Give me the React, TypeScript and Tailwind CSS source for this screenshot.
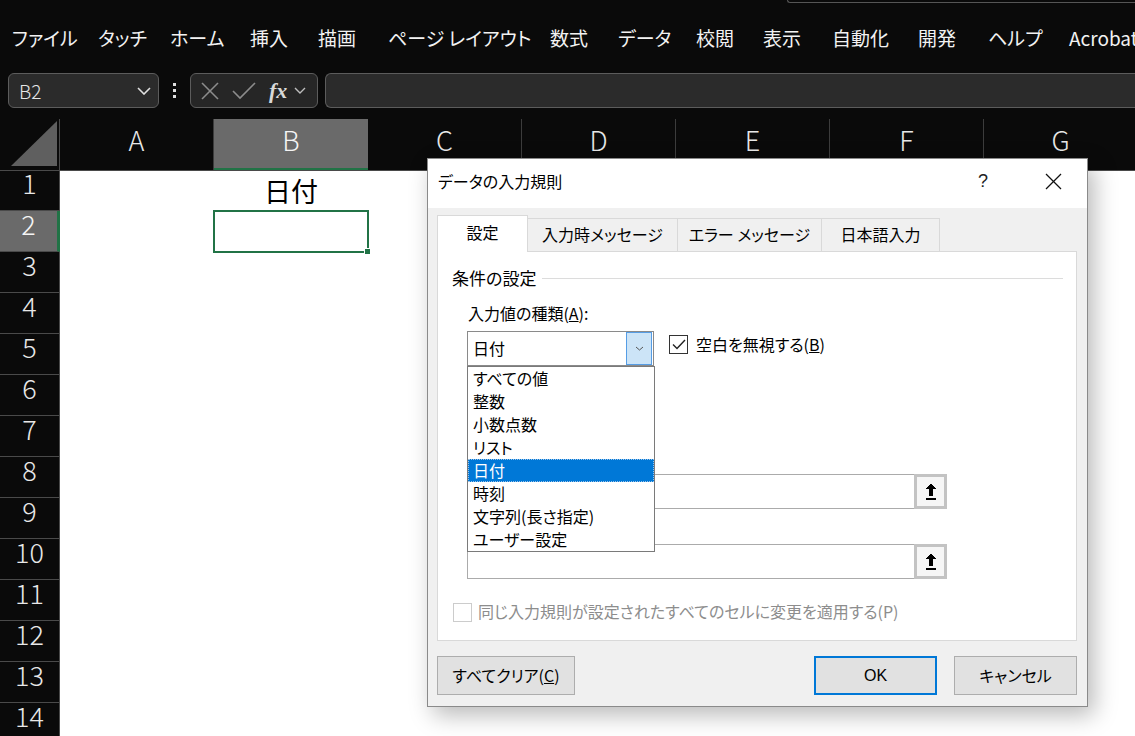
import React from "react";

const menu: [string, number][] = [
  ["ファイル", 86],
  ["タッチ", 72],
  ["ホーム", 80],
  ["挿入", 68],
  ["描画", 70],
  ["ページ レイアウト", 162],
  ["数式", 68],
  ["データ", 78],
  ["校閲", 67],
  ["表示", 69],
  ["自動化", 86],
  ["開発", 70],
  ["ヘルプ", 81],
  ["Acrobat", 120],
];

const cols = ["A", "B", "C", "D", "E", "F", "G"];
const rows = Array.from({ length: 14 }, (_, i) => i + 1);
const items = ["すべての値", "整数", "小数点数", "リスト", "日付", "時刻", "文字列(長さ指定)", "ユーザー設定"];

function Chevron({ className = "", w = 14, h = 8, color = "#d0d0d0", sw = 1.6 }: { className?: string; w?: number; h?: number; color?: string; sw?: number }) {
  return (
    <svg width={w} height={h} viewBox={`0 0 ${w} ${h}`} className={className}>
      <polyline points={`1,1 ${w / 2},${h - 1} ${w - 1},1`} fill="none" stroke={color} strokeWidth={sw} />
    </svg>
  );
}

function UpArrow() {
  return (
    <svg width="14" height="20" viewBox="0 0 14 20" shapeRendering="crispEdges">
      <path d="M7 1 L12 7 L9 7 L9 14 L5 14 L5 7 L2 7 Z" fill="#000" />
      <rect x="2" y="16" width="10" height="1.5" fill="#000" />
    </svg>
  );
}

function RefInput() {
  return (
    <div className="flex w-[480px] h-[35px]">
      <div className="flex-1 border border-[#ababab] border-r-0 bg-white" />
      <div className="w-[33px] h-[35px] border-[3px] border-[#c3c3c3] bg-[#f6f6f6] flex items-center justify-center">
        <UpArrow />
      </div>
    </div>
  );
}

export default function App() {
  return (
    <div className="w-[1135px] h-[736px] overflow-hidden relative bg-white font-['Noto_Sans_CJK_JP',sans-serif] [font-feature-settings:'palt']">
      {/* top dark area */}
      <div className="bg-[#0a0a0a]">
        <div className="h-[3px] flex">
          <div className="ml-[787px] flex-1 h-[3px] border-l border-b border-[#555] rounded-bl-[4px]" />
        </div>
        <div className="h-[70px] flex items-center pl-[12px] text-[19px] text-[#f2f2f2] whitespace-nowrap">
          {menu.map(([t, w]) => (
            <div key={t} style={{ width: w }} className="shrink-0">
              {t}
            </div>
          ))}
        </div>
        {/* formula bar */}
        <div className="h-[35px] flex items-center">
          <div className="ml-[8px] w-[151px] h-[35px] rounded-[6px] border border-[#5c5c5c] bg-[#2b2b2b] flex items-center pl-[10px] pr-[7px]">
            <span className="text-[19px] text-[#e6e6e6] font-light leading-none">B2</span>
            <Chevron className="ml-auto" w={14} h={8} color="#e0e0e0" />
          </div>
          <div className="w-[31px] flex flex-col items-center gap-[3px]">
            <div className="w-[3px] h-[3px] bg-[#e0e0e0]" />
            <div className="w-[3px] h-[3px] bg-[#e0e0e0]" />
            <div className="w-[3px] h-[3px] bg-[#e0e0e0]" />
          </div>
          <div className="w-[128px] h-[35px] rounded-[6px] border border-[#5c5c5c] bg-[#262626] flex items-center">
            <svg width="20" height="20" viewBox="0 0 20 20" className="ml-[9px]">
              <line x1="2" y1="2" x2="18" y2="18" stroke="#8c8c8c" strokeWidth="1.6" />
              <line x1="18" y1="2" x2="2" y2="18" stroke="#8c8c8c" strokeWidth="1.6" />
            </svg>
            <svg width="24" height="18" viewBox="0 0 24 18" className="ml-[12px]">
              <polyline points="1,9 8,16 23,1" fill="none" stroke="#8c8c8c" strokeWidth="1.6" />
            </svg>
            <span className="ml-[13px] text-[22px] italic font-bold text-[#d8d8d8] font-['Liberation_Serif',serif] leading-none">fx</span>
            <Chevron className="ml-[7px]" w={12} h={7} color="#bdbdbd" sw={1.4} />
          </div>
          <div className="ml-[7px] flex-1 h-[35px] rounded-l-[6px] border border-r-0 border-[#5c5c5c] bg-[#2b2b2b]" />
        </div>
        <div className="h-[11px]" />
        {/* column headers */}
        <div className="h-[52px] flex border-b border-[#4a4a4a]">
          <div className="w-[60px] h-full border-r border-[#4a4a4a] flex items-end justify-end pr-[2px] pb-[4px] shrink-0">
            <svg width="46" height="45" viewBox="0 0 46 45">
              <polygon points="0,45 46,45 46,0" fill="#5f5f5f" />
            </svg>
          </div>
          {cols.map((c) => (
            <div
              key={c}
              className={
                c === "B"
                  ? "w-[154px] shrink-0 h-full bg-[#6a6a6a] border-b-[2px] border-[#217346] flex items-center justify-center pb-[8px] text-[27px] font-light text-[#f5f5f5] leading-none"
                  : "w-[154px] shrink-0 h-full border-r border-[#3c3c3c] flex items-center justify-center pb-[10px] text-[27px] font-light text-[#e8e8e8] leading-none"
              }
            >
              {c}
            </div>
          ))}
        </div>
      </div>

      {/* grid */}
      <div className="flex">
        <div className="w-[60px] shrink-0 bg-[#0a0a0a] border-r border-[#4a4a4a]">
          {rows.map((r) => (
            <div
              key={r}
              className={
                (r === 1 ? "h-[40px] " : "h-[41px] ") +
                (r === 2
                  ? "bg-[#6a6a6a] border-r-[3px] border-r-[#217346] -mr-px text-[#f5f5f5] "
                  : "text-[#e8e8e8] ") +
                "border-b border-b-[#4a4a4a] flex items-center justify-center pb-[16px] text-[27px] font-light leading-none"
              }
            >
              {r}
            </div>
          ))}
        </div>
        <div className="flex-1 bg-white">
          <div className="h-[40px] flex">
            <div className="w-[153px] shrink-0" />
            <div className="w-[156px] shrink-0 flex items-center justify-center text-[27px] text-black leading-none pb-[2px]">日付</div>
          </div>
          <div className="h-[42px] flex -mt-px">
            <div className="w-[153px] shrink-0" />
            <div className="w-[156px] shrink-0 h-[43px] border-[2px] border-[#217346] relative">
              <div className="absolute -right-[4px] -bottom-[4px] w-[7px] h-[7px] bg-[#217346] border border-white" />
            </div>
          </div>
        </div>
      </div>

      {/* dialog */}
      <div className="absolute left-[427px] top-[158px] w-[661px] h-[549px] bg-[#f0f0f0] border border-[#8a8a8a] shadow-[6px_8px_22px_rgba(0,0,0,0.28)] text-[16px] text-black">
        <div className="h-[49px] bg-white flex items-center pb-[5px]">
          <span className="ml-[10px] text-[16px]">データの入力規則</span>
          <div className="ml-auto w-[46px] text-center text-[18px] text-[#222] font-['Liberation_Sans',sans-serif]">?</div>
          <div className="ml-[24px] w-[46px] flex items-center justify-center mr-[11px]">
            <svg width="17" height="17" viewBox="0 0 17 17">
              <line x1="1" y1="1" x2="16" y2="16" stroke="#111" strokeWidth="1.2" />
              <line x1="16" y1="1" x2="1" y2="16" stroke="#111" strokeWidth="1.2" />
            </svg>
          </div>
        </div>
        <div className="px-[9px] pt-[7px]">
          {/* tabs */}
          <div className="flex items-end h-[36px] relative z-10">
            <div className="w-[91px] h-[37px] -mb-px bg-white border border-b-0 border-[#d9d9d9] flex items-center justify-center pb-[4px] text-[16px]">設定</div>
            <div className="w-[150px] h-[33px] bg-[#f0f0f0] border border-l-0 border-b-0 border-[#d9d9d9] flex items-center justify-center pb-[2px] text-[16px]">入力時メッセージ</div>
            <div className="w-[144px] h-[33px] bg-[#f0f0f0] border border-l-0 border-b-0 border-[#d9d9d9] flex items-center justify-center pb-[2px] text-[16px]">エラー メッセージ</div>
            <div className="w-[118px] h-[33px] bg-[#f0f0f0] border border-l-0 border-b-0 border-[#d9d9d9] flex items-center justify-center pb-[2px] text-[16px]">日本語入力</div>
          </div>
          {/* panel */}
          <div className="w-[640px] h-[390px] bg-white border border-[#d9d9d9]">
            <div className="flex items-center mt-[14px] pl-[14px] pr-[13px] h-[24px]">
              <span className="text-[17px]">条件の設定</span>
              <div className="flex-1 h-px bg-[#dcdcdc] ml-[6px]" />
            </div>
            <div className="mt-[11px] pl-[30px] h-[24px] flex items-center text-[16px]">
              入力値の種類(<span className="underline">A</span>):
            </div>
            <div className="mt-[6px] pl-[29px] flex items-start">
              <div className="relative w-[187px] h-[35px] border border-[#8a8a8a] bg-white flex items-center">
                <span className="ml-[5px] text-[16px] pb-[2px]">日付</span>
                <div className="ml-auto mr-px w-[26px] h-[33px] bg-[#cce4f7] border border-[#569de5] flex items-center justify-center">
                  <Chevron w={9} h={5} color="#555" sw={1} />
                </div>
                {/* dropdown list */}
                <div className="absolute left-[-1px] top-[34px] w-[188px] bg-white border border-[#7a7a7a] z-20">
                  {items.map((it) => (
                    <div
                      key={it}
                      className={
                        it === "日付"
                          ? "h-[23px] flex items-center pl-[4px] pb-[1px] text-[16px] bg-[#0078d7] text-white border border-dotted border-[#9cc3e8]"
                          : "h-[23px] flex items-center pl-[5px] pb-[1px] text-[16px] text-black"
                      }
                    >
                      {it}
                    </div>
                  ))}
                </div>
              </div>
              <div className="ml-[15px] mt-[4px] w-[19px] h-[19px] border border-[#333] bg-white flex items-center justify-center">
                <svg width="14" height="11" viewBox="0 0 14 11">
                  <polyline points="1,5.5 5,9.5 13,1" fill="none" stroke="#222" strokeWidth="1.4" />
                </svg>
              </div>
              <div className="ml-[8px] mt-[1px] h-[24px] flex items-center text-[16px]">
                空白を無視する(<span className="underline">B</span>)
              </div>
            </div>
            <div className="mt-[108px] pl-[29px]">
              <RefInput />
            </div>
            <div className="mt-[35px] pl-[29px]">
              <RefInput />
            </div>
            <div className="mt-[20px] pl-[15px] flex items-center">
              <div className="w-[19px] h-[19px] border border-[#cccccc] bg-white" />
              <span className="ml-[6px] text-[16px] text-[#8d8d8d] pb-[2px]">同じ入力規則が設定されたすべてのセルに変更を適用する(P)</span>
            </div>
          </div>
          {/* buttons */}
          <div className="mt-[15px] flex">
            <div className="w-[138px] h-[39px] bg-[#e1e1e1] border border-[#adadad] flex items-center justify-center pb-[2px] text-[16px]">
              すべてクリア(<span className="underline">C</span>)
            </div>
            <div className="ml-auto w-[123px] h-[39px] bg-[#e1e1e1] border-[2px] border-[#0078d7] flex items-center justify-center text-[16px] font-['Liberation_Sans',sans-serif]">
              OK
            </div>
            <div className="ml-[17px] mr-[1px] w-[123px] h-[39px] bg-[#e1e1e1] border border-[#adadad] flex items-center justify-center pb-[2px] text-[16px]">
              キャンセル
            </div>
          </div>
        </div>
      </div>
    </div>
  );
}
